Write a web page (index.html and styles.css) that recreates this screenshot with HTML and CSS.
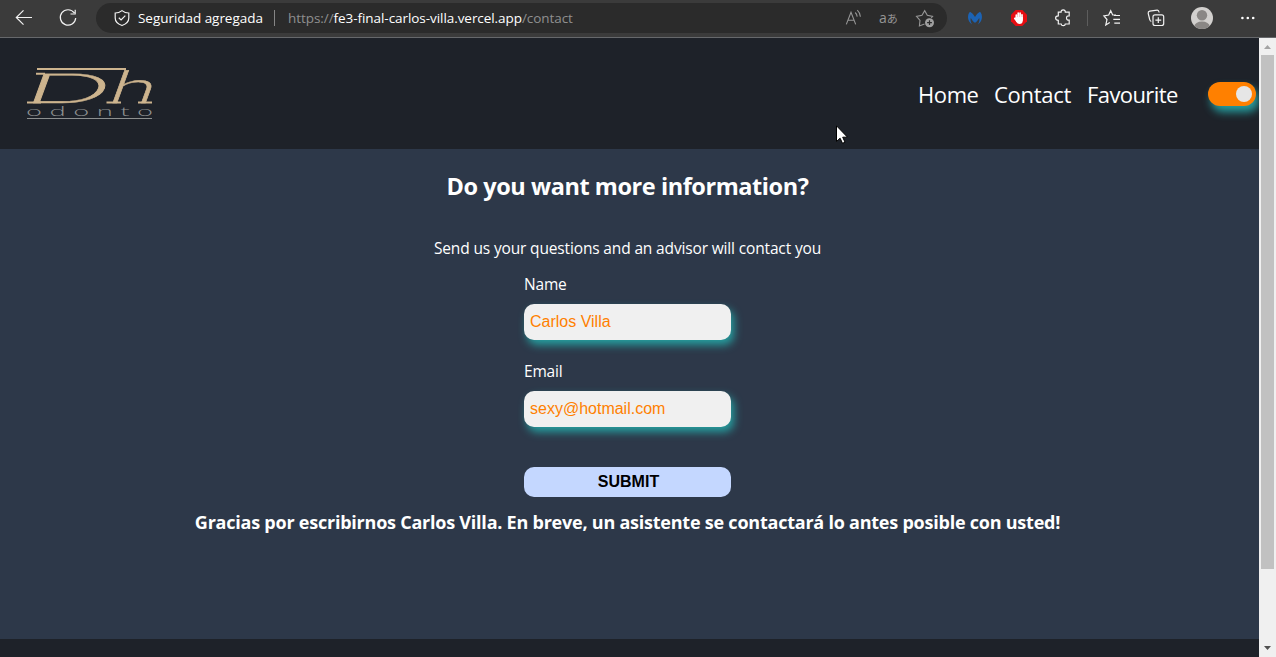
FILE: index.html
```html
<!DOCTYPE html>
<html lang="es">
<head>
<meta charset="utf-8">
<title>Contact</title>
<link rel="stylesheet" href="styles.css">
</head>
<body>
<div class="toolbar">
  <svg class="ico back" width="24" height="24" viewBox="0 0 24 24"><path d="M20 11.5H4.5M11.5 4.3L4.3 11.5L11.5 18.7"/></svg>
  <svg class="ico reload" width="24" height="24" viewBox="0 0 24 24"><path d="M18.3 7A7.7 7.7 0 1 0 19.7 12M19.2 3.8V8H14.5"/></svg>
  <div class="address">
    <svg class="ico" width="20" height="20" viewBox="0 0 20 20"><path d="M10 2.6C12 4.2 14.500 5 16.800 5V10C16.800 13.500 14.300 16 10 17.500C5.700 16 3.200 13.500 3.200 10V5C5.500 5 8 4.200 10 2.600ZM6.800 9.800L9.100 12L13.300 7.700"/></svg>
    <span class="security">Seguridad agregada</span>
    <span class="bar"></span>
    <span class="url"><span class="scheme">https://</span><span class="host">fe3-final-carlos-villa.vercel.app</span><span class="path">/contact</span></span>
    <span class="actions">
      <svg class="dim" width="20" height="20" viewBox="0 0 20 20"><path d="M3.300 16.400L8 4.200L12.700 16.400M4.900 12.300H11.100M12.200 4.500Q14 6.300 14.200 8.600M14.300 2.200Q17.200 5 17.400 8.700"/></svg>
      <span class="translate"><span class="latin">a</span>あ</span>
      <svg class="dim" width="20" height="20" viewBox="0 0 20 20"><path d="M9.500 16L4.400 18L5 12.400L1.500 8.400L7 7.300L9.700 2.700L12.300 7.300L17.600 8.400L16.300 10"/><circle class="badge" cx="14.500" cy="14.700" r="4.500"/><path class="plus" d="M14.500 12.300V17.100M12.100 14.700H16.900"/></svg>
    </span>
  </div>
  <div class="extensions">
    <svg width="24" height="24" viewBox="0 0 24 24"><path fill="#1c63b4" d="M7 5.800C9 7 10.500 8.500 12 11C13.500 8.500 15 7 17 5.800C20 9 19.800 15 15 18.500C16.600 15.500 16.700 13.500 16.200 12C15.300 13.500 14.300 15 12.800 16.500H11.200C9.700 15 8.700 13.500 7.800 12C7.300 13.500 7.400 15.500 9 18.500C4.200 15 4 9 7 5.800Z"/></svg>
    <svg width="24" height="24" viewBox="0 0 24 24"><path fill="#e60d12" d="M8.700 4H15.300L20 8.700V15.300L15.300 20H8.700L4 15.300V8.700Z"/><path d="M9.300 9V13M11.200 7.200V12M13.100 7.200V12M15 8.800V13M7.800 12.400L9.800 15" fill="none" stroke="#fff" stroke-width="1.700" stroke-linecap="round"/><path fill="#fff" d="M8.500 11H15.900V14.500Q15.500 18 12.500 18Q10.500 18 9 15.500Z"/></svg>
    <svg class="ico" width="24" height="24" viewBox="0 0 24 24"><path d="M7.300 6.200H10.100Q10 3.900 12.200 3.900T14.300 6.200H18.200V9.900Q15.500 9.700 15.500 12T18.200 14.200V18H14.300Q14.200 19.700 12.300 19.700T10.200 18H7.300V14.300Q4.600 14.300 4.600 12.100T7.300 9.900Z"/></svg>
    <span class="divider"></span>
    <svg class="ico" width="24" height="24" viewBox="0 0 24 24"><path d="M9.800 16.400L5.800 18.900L7 13.500L3.900 9.900L8.700 9L10.700 4.700L12.700 9H16M14 9.500H20M13.300 13.300H20M14.300 17.200H20"/></svg>
    <svg class="ico" width="24" height="24" viewBox="0 0 24 24"><path d="M7.300 15.500Q6 15 5.700 13.500L4.200 7.300Q3.900 5.500 5.700 5.100L13.200 4.100Q14.700 4 15.200 6.500"/><rect x="9" y="8.800" width="10.700" height="10.700" rx="2"/><path d="M14.300 11.300V17M11.400 14.200H17.200"/></svg>
    <svg class="avatar" width="24" height="24" viewBox="0 0 24 24"><defs><clipPath id="face"><circle cx="12" cy="12" r="11"/></clipPath></defs><circle cx="12" cy="12" r="11" fill="#d2d0ce"/><g fill="#8a8785" clip-path="url(#face)"><circle cx="12" cy="9.200" r="5.200"/><ellipse cx="12" cy="20.500" rx="7.700" ry="5"/></g></svg>
    <svg class="more" width="24" height="24" viewBox="0 0 24 24"><g fill="#fff"><circle cx="7.400" cy="12" r="1.300"/><circle cx="12.800" cy="12" r="1.300"/><circle cx="18.200" cy="12" r="1.300"/></g></svg>
  </div>
</div>
<div class="window">
  <div class="page">
    <header class="header">
      <svg class="logo" width="140" height="60" viewBox="0 0 140 60">
        <g class="initials">
          <text class="d" transform="translate(2 39.300) skewX(-20) scale(2.650 1)">D</text>
          <text class="h" transform="translate(86 39.300) skewX(-20) scale(1.850 1)">h</text>
        </g>
        <path d="M17 5H106M16 9.700H25M7 38.400H21M86.500 38.400H101M118 38.400H132" stroke="#cdb48e" stroke-width="2"/>
        <text class="odonto" transform="translate(6 51.600) scale(2.100 1)" textLength="60.500">odonto</text>
        <path d="M7 54.500H132" stroke="#8c8f8f" stroke-width="1"/>
      </svg>
      <nav class="nav"><a class="home">Home</a><a class="contact">Contact</a><a class="favourite">Favourite</a></nav>
      <span class="toggle"><span class="knob"></span></span>
    </header>
    <main class="main">
      <h2 class="title">Do you want more information?</h2>
      <p class="lead">Send us your questions and an advisor will contact you</p>
      <form class="form">
        <label class="label name">Name</label>
        <div class="field">Carlos Villa</div>
        <label class="label email">Email</label>
        <div class="field">sexy@hotmail.com</div>
        <div class="submit">SUBMIT</div>
      </form>
      <h4 class="thanks">Gracias por escribirnos Carlos Villa. En breve, un asistente se contactará lo antes posible con usted!</h4>
    </main>
    <footer class="footer"></footer>
  </div>
  <div class="scrollbar">
    <svg width="17" height="17" viewBox="0 0 17 17"><path fill="#a3a3a3" d="M5 11L8.500 7L12 11Z"/></svg>
    <span class="thumb"></span>
    <svg class="down" width="17" height="17" viewBox="0 0 17 17"><path fill="#505050" d="M5 6L8.500 10L12 6Z"/></svg>
  </div>
</div>
<svg class="cursor" width="12" height="19" viewBox="0 0 12 19"><path d="M.5 .8V16.500L4.100 13.200L6.500 18.300L9 17.200L6.700 12.200H11.500Z" fill="#fff" stroke="#000"/></svg>
</body>
</html>
```
FILE: styles.css
```css
* { box-sizing: border-box; }
body {
  margin: 0;
  width: 1276px;
  height: 657px;
  overflow: hidden;
  display: flex;
  flex-direction: column;
  font-family: "Open Sans", "Noto Sans", sans-serif;
  color: #fff;
}
svg { display: block; flex: none; }
.toolbar {
  height: 38px;
  flex: none;
  display: flex;
  align-items: center;
  padding: 0 16px 2px 12px;
  background: #3b3b3b;
  border-bottom: 1px solid #66686b;
}
.ico { fill: none; stroke: #f2f2f2; stroke-width: 1.2; }
.reload { margin-left: 20px; }
.address {
  width: 851px;
  height: 30px;
  flex: none;
  margin-left: 16px;
  border-radius: 15px;
  background: #2b2b2b;
  display: flex;
  align-items: center;
  padding: 0 12px 0 16px;
  font-size: 13.5px;
  white-space: nowrap;
}
.security { width: 126px; margin-left: 6px; letter-spacing: -0.04px; }
.bar { width: 1px; height: 16px; margin: 0 13px 0 10px; background: #858585; }
.url { color: #8f8f8f; letter-spacing: -0.06px; }
.host { color: #fff; }
.actions { display: flex; align-items: center; gap: 16px; margin-left: auto; }
.dim { fill: none; stroke: #969696; stroke-width: 1.1; }
.badge { fill: #a0a0a0; stroke: none; }
.plus { stroke: #2b2b2b; stroke-width: 1.2; }
.translate {
  width: 20px;
  color: #969696;
  font: 11px/20px "Noto Sans CJK JP", sans-serif;
}
.latin { font: 14px/20px "Open Sans", sans-serif; }
.extensions { display: flex; align-items: center; gap: 20px; margin-left: 16px; }
.divider { width: 1px; height: 16px; margin: 0 -8px; background: #5d5d5d; }
.avatar { margin: 0 1px 0 2px; }
.window { flex: 1; display: flex; min-height: 0; }
.page { width: 1259px; display: flex; flex-direction: column; background: #2d3849; }
.header {
  height: 111px;
  flex: none;
  display: flex;
  align-items: center;
  padding: 0 3px 0 20px;
  background: #1e2229;
}
.logo { overflow: visible; }
.initials {
  font-family: Lato, sans-serif;
  font-weight: 300;
  fill: #cdb48e;
  stroke: #cdb48e;
  stroke-width: 0.4px;
}
.d { font-size: 41.5px; }
.h { font-size: 45px; }
.odonto { font: 300 13px "Open Sans", sans-serif; fill: #8c8f8f; }
.nav {
  display: flex;
  gap: 16px;
  margin-left: auto;
  font-size: 22px;
  line-height: 32px;
  letter-spacing: -0.4px;
}
.home { width: 60px; }
.contact { width: 77px; letter-spacing: -0.3px; }
.favourite { width: 91px; letter-spacing: -0.6px; }
.toggle {
  width: 48px;
  height: 24px;
  margin: 0 0 0 30px;
  padding: 4px;
  display: flex;
  justify-content: flex-end;
  border-radius: 12px;
  background: #ff8000;
  box-shadow: 3px 6px 8px #269fa0;
}
.knob { width: 16px; height: 16px; border-radius: 50%; background: #e6e6e6; }
.main {
  height: 490px;
  flex: none;
  display: flex;
  flex-direction: column;
  align-items: center;
  padding: 21px 4px 0 0;
  white-space: nowrap;
}
.title { margin: 0; font-size: 23.5px; line-height: 32px; font-weight: 700; letter-spacing: -0.44px; }
.lead { margin: 34px 0 0; font-size: 15.5px; line-height: 24px; letter-spacing: -0.15px; }
.form { width: 207px; display: flex; flex-direction: column; }
.label { font-size: 15.5px; line-height: 24px; letter-spacing: -0.2px; }
.name { margin-top: 12px; }
.email { margin-top: 19px; }
.field {
  height: 36px;
  margin-top: 8px;
  padding: 0 6px;
  border-radius: 10px;
  background: #f0f0f0;
  box-shadow: 3px 5px 8px #269fa0;
  color: #ff8000;
  font: 16px/35px "Liberation Sans", Arial, sans-serif;
}
.submit {
  height: 30px;
  margin-top: 40px;
  padding-left: 2px;
  border-radius: 10px;
  background: #c4d7ff;
  color: #000;
  font: bold 16px/29px "Liberation Sans", Arial, sans-serif;
  text-align: center;
}
.thanks { margin: 12px 0 0; font-size: 18px; line-height: 26px; font-weight: 700; letter-spacing: -0.23px; }
.footer { flex: 1; background: #1e2229; }
.scrollbar { width: 17px; background: #f0f0f0; display: flex; flex-direction: column; }
.thumb { height: 514px; margin: 0 2px; background: #c1c1c1; }
.down { margin-top: auto; }
.cursor { position: absolute; left: 836px; top: 125px; }
```
